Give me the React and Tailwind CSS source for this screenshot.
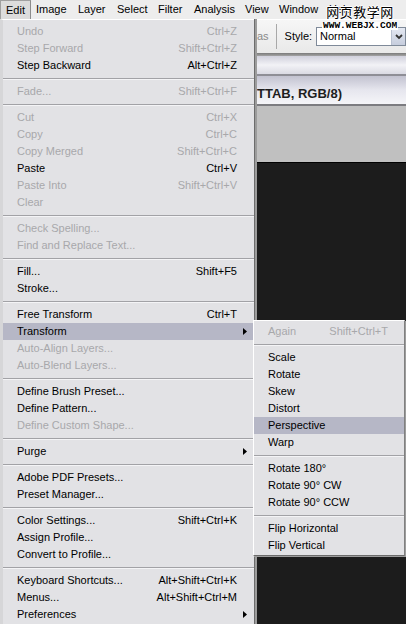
import React from 'react';

const editItems = [
    { label: 'Undo', sc: 'Ctrl+Z', dis: true },
    { label: 'Step Forward', sc: 'Shift+Ctrl+Z', dis: true },
    { label: 'Step Backward', sc: 'Alt+Ctrl+Z' },
    'sep',
    { label: 'Fade...', sc: 'Shift+Ctrl+F', dis: true },
    'sep',
    { label: 'Cut', sc: 'Ctrl+X', dis: true },
    { label: 'Copy', sc: 'Ctrl+C', dis: true },
    { label: 'Copy Merged', sc: 'Shift+Ctrl+C', dis: true },
    { label: 'Paste', sc: 'Ctrl+V' },
    { label: 'Paste Into', sc: 'Shift+Ctrl+V', dis: true },
    { label: 'Clear', dis: true },
    'sep',
    { label: 'Check Spelling...', dis: true },
    { label: 'Find and Replace Text...', dis: true },
    'sep',
    { label: 'Fill...', sc: 'Shift+F5' },
    { label: 'Stroke...' },
    'sep',
    { label: 'Free Transform', sc: 'Ctrl+T' },
    { label: 'Transform', sub: true, active: true },
    { label: 'Auto-Align Layers...', dis: true },
    { label: 'Auto-Blend Layers...', dis: true },
    'sep',
    { label: 'Define Brush Preset...' },
    { label: 'Define Pattern...' },
    { label: 'Define Custom Shape...', dis: true },
    'sep',
    { label: 'Purge', sub: true },
    'sep',
    { label: 'Adobe PDF Presets...' },
    { label: 'Preset Manager...' },
    'sep',
    { label: 'Color Settings...', sc: 'Shift+Ctrl+K' },
    { label: 'Assign Profile...' },
    { label: 'Convert to Profile...' },
    'sep',
    { label: 'Keyboard Shortcuts...', sc: 'Alt+Shift+Ctrl+K' },
    { label: 'Menus...', sc: 'Alt+Shift+Ctrl+M' },
    { label: 'Preferences', sub: true },
];

const transformItems = [
    { label: 'Again', sc: 'Shift+Ctrl+T', dis: true },
    'sep',
    { label: 'Scale' },
    { label: 'Rotate' },
    { label: 'Skew' },
    { label: 'Distort' },
    { label: 'Perspective', active: true },
    { label: 'Warp' },
    'sep',
    { label: 'Rotate 180°' },
    { label: 'Rotate 90° CW' },
    { label: 'Rotate 90° CCW' },
    'sep',
    { label: 'Flip Horizontal' },
    { label: 'Flip Vertical' },
];

// menubar entries: [label, box width, left padding]
const menuBar = [
    ['Edit', 31, 6],
    ['Image', 42, 5],
    ['Layer', 39, 5],
    ['Select', 41, 5],
    ['Filter', 36, 5],
    ['Analysis', 51, 5],
    ['View', 34, 5],
    ['Window', 50, 5],
    ['Help', 60, 5],
];

function Arrow() {
    return (
        <svg width="4" height="7" viewBox="0 0 4 7" className="block">
            <path d="M0 0 L4 3.5 L0 7 Z" fill="#000" />
        </svg>
    );
}

function MenuList({ items, padL, padR }) {
    return (
        <div className="flex flex-col">
            {items.map((it, i) => {
                if (it === 'sep') {
                    return (
                        <div key={i} className="h-[9px] flex flex-col justify-center">
                            <div className="h-px bg-[#a2a2a6]" />
                            <div className="h-px bg-[#f4f4f6]" />
                        </div>
                    );
                }
                return (
                    <div
                        key={i}
                        className={
                            'h-[17px] flex items-center justify-between ' +
                            (it.active ? 'bg-[#b6b7c6] ' : '') +
                            (it.dis ? 'text-[#a8a8ab]' : 'text-black')
                        }
                        style={{ paddingLeft: padL, paddingRight: padR }}
                    >
                        <span className="whitespace-nowrap">{it.label}</span>
                        {it.sc && <span className="whitespace-nowrap">{it.sc}</span>}
                        {it.sub && (
                            <span className="mr-[-10px]">
                                <Arrow />
                            </span>
                        )}
                    </div>
                );
            })}
        </div>
    );
}

export default function App() {
    return (
        <div className="relative w-[406px] h-[624px] overflow-hidden bg-[#1c1c1c] font-['Liberation_Sans',Arial,sans-serif] text-[11px] leading-none">
            {/* menu bar */}
            <div className="h-[19px] bg-[#ededed] flex items-stretch text-black">
                {menuBar.map(([label, w, pl], i) => (
                    <div
                        key={label}
                        className={
                            'flex items-center ' +
                            (i === 0 ? 'bg-[#dcdcdc] border-t border-l border-[#a0a0a0] border-r border-r-[#8c8c8c]' : '')
                        }
                        style={{ width: w, paddingLeft: i === 0 ? pl - 1 : pl }}
                    >
                        {label}
                    </div>
                ))}
            </div>

            {/* options bar */}
            <div className="h-[34px] bg-gradient-to-b from-[#f6f6f6] to-[#e9e9e9] border-t border-white flex items-center pl-[257px]">
                <span className="text-[#8a8a8a] w-[19px]">as</span>
                <div className="w-px h-[25px] bg-[#a8a8a8] mr-[8px]" />
                <span className="mr-[4px]">Style:</span>
                <div className="flex h-[19px] w-[92px] border border-[#7f8a99] bg-white">
                    <span className="flex-1 pl-[3px] flex items-center">Normal</span>
                    <div className="w-[14px] bg-gradient-to-b from-[#e4e8f2] to-[#c6cddd] border-l border-[#b8c0d0] flex items-center justify-center">
                        <svg width="8" height="6" viewBox="0 0 8 6">
                            <path d="M1 1 L4 4 L7 1" stroke="#333" strokeWidth="1.8" fill="none" />
                        </svg>
                    </div>
                </div>
            </div>
            <div className="h-[3px] bg-gradient-to-b from-[#7a7a7a] to-[#a4a4a4]" />

            {/* tab band */}
            <div className="h-[18px] bg-gradient-to-b from-[#d0d0dc] via-[#f2f2f6] to-[#dadae3]" />
            <div className="h-[2px] bg-[#8e8e96]" />

            {/* document title */}
            <div className="h-[28px] bg-gradient-to-b from-[#c2c2d0] via-[#e6e6ee] to-[#f5f5f8] flex items-center pl-[257px] pt-[7px]">
                <span className="font-bold text-[13px] text-[#1e1e1e] whitespace-nowrap">TTAB, RGB/8)</span>
            </div>
            <div className="h-[2px] bg-[#7c7c80]" />

            {/* canvas surround */}
            <div className="h-[56px] bg-[#c0c0c0]" />
            <div className="h-px bg-[#000]" />

            {/* watermark */}
            <div className="absolute left-[322px] top-[5px] flex flex-col items-center">
                <span
                    className="font-['Noto_Sans_CJK_SC',sans-serif] text-[13px] leading-none text-black tracking-[0.5px]"
                    style={{ textShadow: '1px 0 #fff, -1px 0 #fff, 0 1px #fff, 0 -1px #fff' }}
                >
                    网页教学网
                </span>
                <span className="mt-[4px] bg-white px-[1px] font-['Liberation_Mono',monospace] font-bold text-[9.5px] leading-[8px] text-black">
                    WWW.WEBJX.COM
                </span>
            </div>

            {/* Edit menu */}
            <div className="absolute left-0 top-[19px] w-[254px] h-[620px] bg-[#e2e2e5] border-l-[3px] border-l-[#d6d6d8] border-t border-t-white pt-[3px] shadow-[1px_0_0_#6c6c6c,3px_0_0_#9c9c9c]">
                <MenuList items={editItems} padL={14} padR={17} />
            </div>

            {/* Transform submenu */}
            <div className="absolute left-[253px] top-[320px] w-[152px] h-[236px] bg-[#e2e2e5] border-l border-t border-white border-r border-r-[#808080] border-b border-b-[#6c6c6c] pt-[2px] shadow-[1px_1px_0_#9c9c9c]">
                <MenuList items={transformItems} padL={14} padR={16} />
            </div>
        </div>
    );
}
